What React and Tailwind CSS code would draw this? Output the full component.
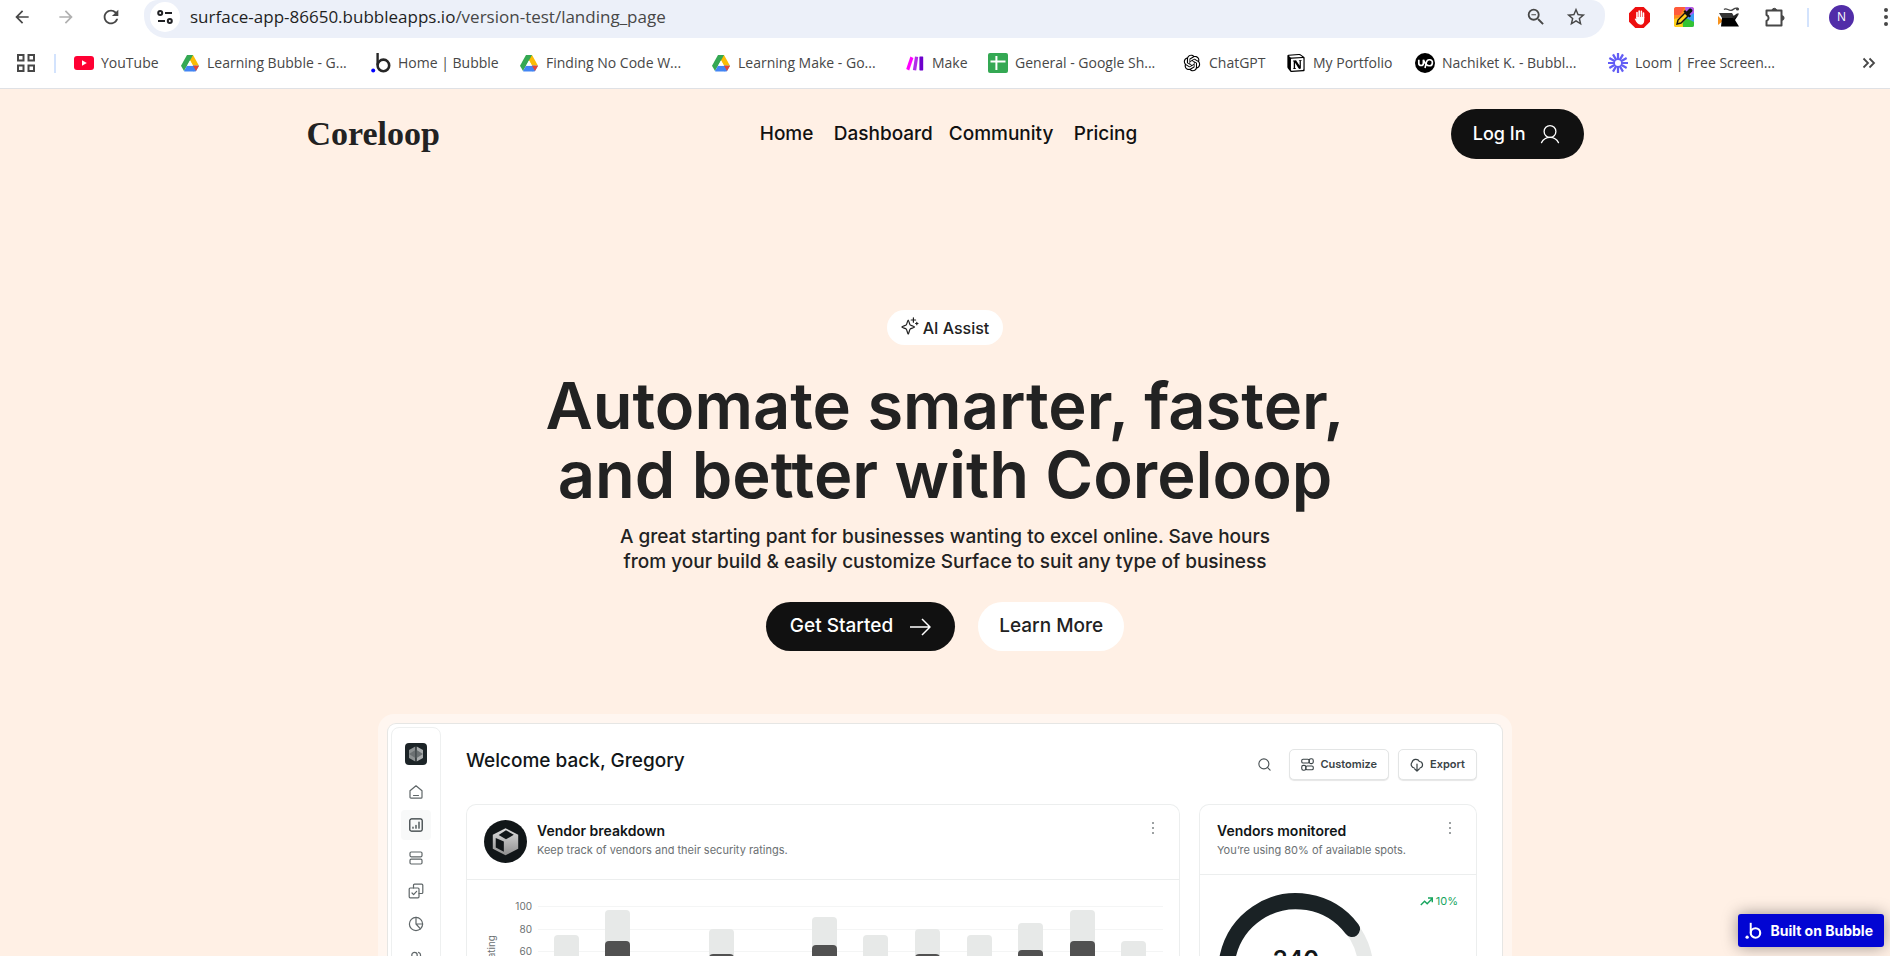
import React from "react";
import { MdArrowBack, MdArrowForward, MdRefresh, MdZoomOut, MdStarBorder } from "react-icons/md";
import { RiOpenaiFill } from "react-icons/ri";
import { SiNotion, SiLoom } from "react-icons/si";
import { Search } from "lucide-react";

/* ---------- browser icons ---------- */

function Drive() {
  return (
    <svg viewBox="0 0 18 17" className="h-[17px] w-[18px]" aria-hidden="true">
      <path d="M6 0h6l6 10.800h-6z" fill="#fbbc04" />
      <path d="M0 10.800l3 5.200L6 10.800 9 5.400 12 0H6z" fill="#34a853" />
      <path d="M3 16l3-5.200h9.200L12.600 16q-.4.6-1 .6H4.200Q3.400 16.600 3 16z" fill="#4285f4" />
      <path d="M12 10.800h6L15 16q-.3.600-1.200.600H12z" fill="#4285f4" />
      <path d="M12 10.800h6L15 16z" fill="#ea4335" />
      <path d="M9 5.400l3 5.400H6z" fill="#fff" />
    </svg>
  );
}

function Youtube() {
  return (
    <svg viewBox="0 0 20 14" className="h-[14px] w-5" aria-hidden="true">
      <rect width="20" height="14" rx="3" fill="#ff0033" />
      <path d="M8 4.200v5.600L12.800 7z" fill="#fff" />
    </svg>
  );
}

function BubbleMark({ className, dot, ink }) {
  return (
    <svg viewBox="0 0 20 22" className={className} aria-hidden="true">
      <circle cx="2.200" cy="18.600" r="2" fill={dot} />
      <path d="M6.600 1v12" stroke={ink} strokeWidth="2.400" fill="none" />
      <circle cx="12.400" cy="13.400" r="5.800" stroke={ink} strokeWidth="2.600" fill="none" />
    </svg>
  );
}

function MakeMark() {
  return (
    <svg viewBox="0 0 18 15" className="h-[15px] w-[18px]" aria-hidden="true">
      <path d="M4.400.6l3 1.400L3.200 14.400.2 13z" fill="#ff00ff" />
      <path d="M9 .4l3.200.6-2 13.600-3.300-.6z" fill="#b02de9" />
      <rect x="13.400" y=".4" width="3.800" height="14" rx=".6" fill="#6d00cc" />
    </svg>
  );
}

function Sheets() {
  return (
    <svg viewBox="0 0 20 20" className="size-5" aria-hidden="true">
      <rect width="20" height="20" rx="2" fill="#34a853" />
      <path d="M8.400 3v14M2.500 8.600h15" stroke="#fff" strokeWidth="2" />
    </svg>
  );
}

function UpMark() {
  return (
    <svg viewBox="0 0 20 20" className="size-5" aria-hidden="true">
      <circle cx="10" cy="10" r="10" fill="#000" />
      <path d="M3.800 6.800v3.400a2.300 2.300 0 0 0 4.600 0V6.800c.8 2.200 1.800 3.800 3.200 4.900" fill="none" stroke="#fff" strokeWidth="1.700" />
      <path d="M10 15l1.500-6a3 3 0 1 1 2.500 3.700c-1 0-1.900-.4-2.600-1" fill="none" stroke="#fff" strokeWidth="1.600" />
    </svg>
  );
}

function AppsGrid() {
  return (
    <svg viewBox="0 0 18 18" className="size-[18px]" fill="none" stroke="#474747" strokeWidth="2" aria-hidden="true">
      <rect x="1" y="1" width="5.500" height="5.500" />
      <rect x="11.500" y="1" width="5.500" height="5.500" />
      <rect x="1" y="11.500" width="5.500" height="5.500" />
      <rect x="11.500" y="11.500" width="5.500" height="5.500" />
    </svg>
  );
}

function SiteControls() {
  return (
    <svg viewBox="0 0 16 16" className="size-4" fill="none" stroke="#202124" strokeWidth="2" aria-hidden="true">
      <circle cx="3.200" cy="4" r="2" />
      <path d="M8 4h7M1 12h7" />
      <circle cx="12.800" cy="12" r="2" />
    </svg>
  );
}

function AdBlock() {
  return (
    <svg viewBox="0 0 20 20" className="size-[21px]" aria-hidden="true">
      <path d="M6 0h8l6 6v8l-6 6H6l-6-6V6z" fill="#ed0f0f" />
      <path d="M7.600 10V5.200M9.700 9.500V3.800M11.800 9.500V4.200M13.800 10.500V5.800" stroke="#fff" strokeWidth="1.500" strokeLinecap="round" />
      <path d="M6.900 9.500h7.600v3.300c0 2.500-1.200 4-3.400 4-2.600 0-3.800-1.700-5.400-4.800-.6-1.200.5-1.500 1.200-.4z" fill="#fff" />
    </svg>
  );
}

function ColorPicker() {
  return (
    <svg viewBox="0 0 20 20" className="size-5" aria-hidden="true">
      <defs>
        <clipPath id="pick"><rect width="20" height="20" rx="2.500" /></clipPath>
      </defs>
      <g clipPath="url(#pick)">
        <rect width="20" height="20" fill="#ff8a1f" />
        <path d="M0 0h11L6 8H0z" fill="#ff5a3c" />
        <path d="M11 0h9v8l-8 2z" fill="#b05cf0" />
        <path d="M20 6v14H10l2-9z" fill="#3d9bf5" />
        <path d="M6 20l6-9 8 4v5z" fill="#33c433" />
        <path d="M0 12l8-2 1 10H0z" fill="#ffd21a" />
      </g>
      <path d="M3 17l1-4 7-7 3 3-7 7z" fill="#ffcf1a" stroke="#111" strokeWidth="1.400" />
      <path d="M9.500 4.500l6 6 1.500-1.500-1.600-1.800 2.800-2.700c1.200-1.400-1.600-4-3-2.700L12.600 4.600 11 3z" fill="#111" />
    </svg>
  );
}

function ReaderMark() {
  return (
    <svg viewBox="0 0 22 20" className="h-5 w-[22px]" aria-hidden="true">
      <path d="M0 9l5 5-5 4z" fill="#f7931e" />
      <path d="M1 6h13l3 5H4z" fill="#333" />
      <path d="M4 11h12l5-4-4 6 4 6.500H3z" fill="#000" />
      <path d="M14 10l5-3.500h2L16 12z" fill="#222" />
      <path d="M6 2.500c2.500-2 4 1 7 .8S16 0 20 1.500" fill="none" stroke="#444" strokeWidth="1.300" />
      <circle cx="19.500" cy="2" r="1.600" fill="#444" />
    </svg>
  );
}

function Puzzle() {
  return (
    <svg viewBox="0 0 22 22" className="size-[22px]" fill="none" stroke="#474747" strokeWidth="2" strokeLinejoin="round" aria-hidden="true">
      <path d="M2.500 4.500h15v15h-15v-4.500a3.200 3.200 0 0 0 0-6z" />
      <path d="M8 4a2.400 2.400 0 0 1 4.600 0zM17.800 9.700a2.300 2.300 0 0 1 0 4.600z" fill="#474747" strokeWidth="1" />
    </svg>
  );
}

const bookmarks = [
  { label: "YouTube", width: "w-[106px]", icon: <Youtube /> },
  { label: "Learning Bubble - G...", width: "w-[191px]", icon: <Drive /> },
  { label: "Home | Bubble", width: "w-[148px]", icon: <BubbleMark className="h-[22px] w-5" dot="#0000ff" ink="#262626" /> },
  { label: "Finding No Code W...", width: "w-[192px]", icon: <Drive /> },
  { label: "Learning Make - Go...", width: "w-[194px]", icon: <Drive /> },
  { label: "Make", width: "w-[83px]", icon: <MakeMark /> },
  { label: "General - Google Sh...", width: "w-[194px]", icon: <Sheets /> },
  { label: "ChatGPT", width: "w-[104px]", icon: <RiOpenaiFill className="size-5 text-black" /> },
  { label: "My Portfolio", width: "w-[129px]", icon: <SiNotion className="size-[18px] text-black" /> },
  { label: "Nachiket K. - Bubbl...", width: "w-[193px]", icon: <UpMark /> },
  { label: "Loom | Free Screen...", width: "w-[180px]", icon: <SiLoom className="size-5 text-[#625df5]" /> },
];

function BrowserBar() {
  return (
    <div className="shrink-0 border-b border-[#dfe1e5] bg-white font-['Open_Sans',sans-serif]">
      <div className="flex h-[38px] items-start overflow-hidden">
        <div className="flex h-[34px] w-36 items-center gap-6 pl-3 text-[#474747]">
          <button aria-label="Back"><MdArrowBack className="size-5" /></button>
          <button aria-label="Forward" className="text-[#b0b0b0]"><MdArrowForward className="size-5" /></button>
          <button aria-label="Reload"><MdRefresh className="size-[22px]" /></button>
        </div>
        <div className="flex h-[38px] flex-1 items-start rounded-b-[22px] rounded-t-[14px] bg-[#ecf0f9]">
          <div className="flex h-[34px] flex-1 items-center pl-[6px] pr-[18px]">
            <button aria-label="Site information" className="flex size-[30px] items-center justify-center rounded-full bg-white">
              <SiteControls />
            </button>
            <a href="#top" className="ml-[10px] text-[17px] leading-6 text-[#474747]">
              <span className="text-[#1f1f1f]">surface-app-86650.bubbleapps.io</span>/version-test/landing_page
            </a>
            <div className="ml-auto flex items-center gap-[18px] text-[#474747]">
              <button aria-label="Zoom out"><MdZoomOut className="size-[22px]" /></button>
              <button aria-label="Bookmark this page"><MdStarBorder className="size-[22px]" /></button>
            </div>
          </div>
        </div>
        <div className="flex h-[34px] w-[285px] items-center pl-6">
          <div className="flex items-center gap-6">
            <button aria-label="Ad blocker"><AdBlock /></button>
            <button aria-label="Color picker"><ColorPicker /></button>
            <button aria-label="Reader"><ReaderMark /></button>
            <button aria-label="Extensions"><Puzzle /></button>
          </div>
          <span className="ml-[21px] h-[19px] w-[2px] bg-[#d3e3fd]" />
          <button aria-label="Profile" className="ml-5 flex size-[25px] items-center justify-center rounded-full bg-[#512da8] text-xs text-white">N</button>
          <button aria-label="More" className="ml-[30px] flex flex-col gap-[3px]">
            <span className="size-1 rounded-full bg-[#474747]" />
            <span className="size-1 rounded-full bg-[#474747]" />
            <span className="size-1 rounded-full bg-[#474747]" />
          </button>
        </div>
      </div>
      <div className="flex h-[50px] items-center pl-[17px] pr-[14px] text-[#474747]">
        <button aria-label="Apps"><AppsGrid /></button>
        <span className="ml-[19px] mr-[18px] h-[19px] w-[2px] bg-[#d3e3fd]" />
        {bookmarks.map((b) => (
          <a key={b.label} href="#top" className={`flex shrink-0 items-center gap-[7px] whitespace-nowrap text-sm ${b.width}`}>
            <span className="flex w-5 shrink-0 justify-center">{b.icon}</span>
            {b.label}
          </a>
        ))}
        <button aria-label="More bookmarks" className="ml-auto">
          <svg viewBox="0 0 14 12" className="h-3 w-[14px]" fill="none" stroke="#474747" strokeWidth="1.800" aria-hidden="true">
            <path d="M1.500 1.500L6 6l-4.500 4.500M7.500 1.500L12 6l-4.500 4.500" />
          </svg>
        </button>
      </div>
    </div>
  );
}

/* ---------- landing page ---------- */

function Person() {
  return (
    <svg viewBox="0 0 20 20" className="size-5" fill="none" stroke="#fff" strokeWidth="1.300" strokeLinecap="round" aria-hidden="true">
      <circle cx="10" cy="7.500" r="5.900" />
      <path d="M1.500 18.600c1.600-3 4.500-5.200 8.500-5.200s6.900 2.200 8.500 5.200" />
    </svg>
  );
}

function Sparkle() {
  return (
    <svg viewBox="0 0 18 18" className="mb-1 size-[18px]" fill="none" stroke="#222" strokeWidth="1.200" strokeLinejoin="round" strokeLinecap="round" aria-hidden="true">
      <path d="M7.200 3.200c.6 0 1.200 4 1.900 4.700s4.500 1.400 4.500 2.100-3.800 1.400-4.500 2.100-1.300 5-1.900 5-1.200-4.300-1.900-5S.8 10.700.8 10s3.800-1.400 4.500-2.100 1.300-4.700 1.900-4.700z" />
      <path d="M12.400.8v4.400M10.200 3h4.400M15.800 5.300v2.400M14.600 6.500H17" />
    </svg>
  );
}

function CubeLogo() {
  return (
    <svg viewBox="0 0 44 44" className="size-[43px] shrink-0" aria-hidden="true">
      <defs>
        <linearGradient id="cube" x1="0" y1="0" x2="0" y2="1">
          <stop offset="0" stopColor="#dcdcdc" />
          <stop offset="1" stopColor="#8f8f8f" />
        </linearGradient>
      </defs>
      <circle cx="22" cy="22" r="22" fill="#111618" />
      <path d="M22 8.500L35 15v14.500L22 36 9 29.500V15z" fill="url(#cube)" />
      <path d="M22.500 10.500l8 4.500-8 4.800-7.500-4.500zM12 18.500l8.300 3.500v10.500L12 28.200z" fill="#111618" />
    </svg>
  );
}

function SidebarLogo() {
  return (
    <svg viewBox="0 0 22 22" className="size-[22px]" aria-hidden="true">
      <rect width="22" height="22" rx="4" fill="#1c2427" />
      <path d="M10.300 3.500v15L4 15V7z" fill="#8d9192" />
      <path d="M11.700 3.500v15L18 15V7z" fill="#a9acad" />
      <path d="M4 11l6.300-4v8zM18 11l-6.300-4v8z" fill="#6b7072" />
    </svg>
  );
}

const line = { fill: "none", stroke: "currentColor", strokeWidth: 1.2, strokeLinejoin: "round", strokeLinecap: "round" };

const sideItems = [
  { label: "Home", art: <path d="M2 6.800L8 1.800l6 5v6.400a1 1 0 0 1-1 1H3a1 1 0 0 1-1-1zM5.500 11.500h5" /> },
  { label: "Analytics", active: true, art: <><rect x="1.800" y="1.800" width="12.400" height="12.400" rx="1.800" /><path d="M5 11.200v-1M8 11.200V8.400M11 11.200V5" /></> },
  { label: "Lists", art: <><rect x="2" y="2" width="12" height="4.800" rx="1.200" /><rect x="2" y="9.200" width="12" height="4.800" rx="1.200" /></> },
  { label: "Tasks", art: <><path d="M5.500 5V2.200a1 1 0 0 1 1-1h7.300a1 1 0 0 1 1 1v7.300a1 1 0 0 1-1 1H11" /><rect x="1.200" y="5" width="9.800" height="9.800" rx="1" /><path d="M4 10l1.600 1.600L8.600 8.300" /></> },
  { label: "Reports", art: <><circle cx="8" cy="8" r="6.600" /><path d="M8 1.400V8h6.600M8 8l4.500 4.800" /></> },
  { label: "Users", art: <><circle cx="6.500" cy="6" r="2.700" /><path d="M10.500 3.300a2.800 2.800 0 0 1 0 5.400M1.500 14c.8-2.500 2.600-3.400 5-3.400s4.200.9 5 3.400" /></> },
];

function Sidebar() {
  return (
    <nav aria-label="Dashboard" className="flex w-[50px] shrink-0 flex-col items-center gap-[3px] self-stretch rounded-lg border border-[#eef0f0] pt-[15px]">
      <div className="mb-[9px]"><SidebarLogo /></div>
      {sideItems.map((item) => (
        <button
          key={item.label}
          aria-label={item.label}
          className={`flex size-[30px] items-center justify-center rounded-sm ${item.active ? "bg-[#f8f9f9] text-[#2b3437]" : "text-[#5f6668]"}`}
        >
          <svg viewBox="0 0 16 16" className="size-4" {...line}>{item.art}</svg>
        </button>
      ))}
    </nav>
  );
}

function Dots() {
  return (
    <button aria-label="Options" className="flex flex-col gap-[3px]">
      <span className="size-[2px] rounded-full bg-[#7d8284]" />
      <span className="size-[2px] rounded-full bg-[#7d8284]" />
      <span className="size-[2px] rounded-full bg-[#7d8284]" />
    </button>
  );
}

const grid = [
  { label: "100", y: 26 },
  { label: "80", y: 49 },
  { label: "60", y: 71 },
  { label: "40", y: 94 },
  { label: "20", y: 117 },
  { label: "0", y: 140 },
];

const bars = [
  { x: 87, top: 55, dark: 84 },
  { x: 138, top: 30, dark: 61 },
  { x: 190, top: 84, dark: 102 },
  { x: 242, top: 49, dark: 74 },
  { x: 293, top: 84, dark: 102 },
  { x: 345, top: 37, dark: 65 },
  { x: 396, top: 55, dark: 84 },
  { x: 448, top: 49, dark: 74 },
  { x: 500, top: 55, dark: 84 },
  { x: 551, top: 43, dark: 70 },
  { x: 603, top: 30, dark: 61 },
  { x: 654, top: 61, dark: 84 },
];

function RatingChart() {
  return (
    <svg viewBox="0 0 712 160" className="block w-full" role="img" aria-label="Security rating by vendor">
      {grid.map((g) => (
        <g key={g.label}>
          <text x="65" y={g.y + 4} textAnchor="end" fontSize="10" fill="#6b7072">{g.label}</text>
          <path d={`M71 ${g.y + 0.5}H696`} stroke="#f4f5f5" />
        </g>
      ))}
      {bars.map((b) => (
        <g key={b.x}>
          <path d={`M${b.x} 140V${b.top + 4}q0-4 4-4h17q4 0 4 4V140z`} fill="#e7e9e8" />
          <path d={`M${b.x} 140V${b.dark + 4}q0-4 4-4h17q4 0 4 4V140z`} fill="#515151" />
        </g>
      ))}
      <text transform="translate(28 55) rotate(-90)" textAnchor="end" fontSize="10" fill="#6b7072">Security rating</text>
    </svg>
  );
}

function Gauge() {
  return (
    <svg viewBox="0 0 156 156" className="block size-[156px]" role="img" aria-label="240 vendors">
      <circle cx="78" cy="78" r="70" fill="none" stroke="#e7e9e8" strokeWidth="15" />
      <path d="M18 114A70 70 0 0 1 134 36" fill="none" stroke="#1a2225" strokeWidth="16" strokeLinecap="round" />
      <text x="78" y="75" textAnchor="middle" fontSize="24" fontWeight="600" fill="#111618">240</text>
    </svg>
  );
}

const actionClass =
  "flex h-[31px] items-center gap-[6px] rounded-[5px] border border-[#e3e5e5] bg-white px-[11px] text-[11px] font-semibold text-[#3a4346] shadow-[0_1px_1px_rgba(0,0,0,0.1)]";

function DashboardPreview() {
  return (
    <section className="mx-auto mt-[63px] w-full max-w-[1134px] rounded-t-2xl bg-[#fff6f0] px-[9px] pt-[9px]">
      <div className="flex rounded-t-[9px] border border-b-0 border-[#e6e6e4] bg-white pl-[3px] pt-[3px]">
        <Sidebar />
        <div className="min-w-0 flex-1 px-[25px] pt-[22px]">
          <div className="flex h-[31px] items-start">
            <h2 className="text-[19px] leading-6 font-medium text-[#111618]">Welcome back, Gregory</h2>
            <div className="ml-auto flex items-center gap-[9px]">
              <button aria-label="Search" className="mr-2"><Search className="size-[15px] text-[#4a5255]" strokeWidth={1.8} /></button>
              <button className={actionClass}>
                <svg viewBox="0 0 14 14" className="size-[13px]" {...line}>
                  <rect x=".8" y="1.400" width="8" height="4" rx="1.400" />
                  <rect x="8.800" y=".8" width="4.400" height="5.200" rx="1.800" />
                  <rect x=".8" y="8" width="4.400" height="5.200" rx="1.800" />
                  <rect x="5.200" y="8.600" width="8" height="4" rx="1.400" />
                </svg>
                Customize
              </button>
              <button className={actionClass}>
                <svg viewBox="0 0 14 14" className="size-[14px]" {...line}>
                  <path d="M4.300 10A3.500 3.500 0 0 1 2 4.300a4 4 0 0 1 7.400-.8A3.300 3.300 0 0 1 10 10M7 6v7M4.800 11L7 13.200 9.200 11" />
                </svg>
                Export
              </button>
            </div>
          </div>

          <div className="mt-6 grid grid-cols-[714fr_278fr] gap-[19px]">
            <div className="rounded-t-[10px] border border-b-0 border-[#eceeee]">
              <div className="flex h-[75px] items-start border-b border-[#eceeee] pl-[17px] pr-[25px] pt-[15px]">
                <CubeLogo />
                <div className="ml-[10px] pt-px">
                  <h3 className="text-sm leading-5 font-semibold text-[#111618]">Vendor breakdown</h3>
                  <p className="text-[11px] leading-[18px] text-[#6b7072]">Keep track of vendors and their security ratings.</p>
                </div>
                <div className="ml-auto pt-[2px]"><Dots /></div>
              </div>
              <RatingChart />
            </div>
            <div className="rounded-t-[10px] border border-b-0 border-[#eceeee]">
              <div className="flex h-[70px] items-start border-b border-[#eceeee] pl-[17px] pr-[25px] pt-4">
                <div>
                  <h3 className="text-sm leading-5 font-semibold text-[#111618]">Vendors monitored</h3>
                  <p className="text-[11px] leading-[18px] text-[#6b7072]">You’re using 80% of available spots.</p>
                </div>
                <div className="ml-auto pt-px"><Dots /></div>
              </div>
              <div className="flex items-start justify-between pl-[18px] pr-[18px] pt-[18px]">
                <Gauge />
                <p className="flex items-center gap-[3px] text-[11px] leading-4 text-[#17a55e]">
                  <svg viewBox="0 0 13 9" className="h-[9px] w-[13px]" fill="none" stroke="currentColor" strokeWidth="1.400" aria-hidden="true">
                    <path d="M.8 8L4.600 4.200l2.600 2.600L11.800 2M8 1h4.300v4.300" />
                  </svg>
                  10%
                </p>
              </div>
            </div>
          </div>
        </div>
      </div>
    </section>
  );
}

function Landing() {
  return (
    <div className="min-h-0 flex-1 overflow-hidden bg-[#fff0e5] px-6 pt-5 font-['Inter',sans-serif] text-[#222]">
      <header className="mx-auto grid w-full max-w-[1277px] grid-cols-[1fr_auto_1fr] items-center">
        <a href="#top" className="font-['Liberation_Serif',serif] text-[34px] leading-10 font-bold text-[#222]">Coreloop</a>
        <nav aria-label="Main" className="flex pl-[7px] text-[19px] leading-6 font-medium text-[#111]">
          <a href="#home" className="w-[74px]">Home</a>
          <a href="#dashboard" className="w-[115px]">Dashboard</a>
          <a href="#community" className="w-[125px]">Community</a>
          <a href="#pricing">Pricing</a>
        </nav>
        <button className="flex h-[50px] items-center gap-[14px] justify-self-end rounded-full bg-[#111] pl-[22px] pr-6 text-lg font-medium text-white">
          Log In
          <Person />
        </button>
      </header>

      <main className="flex flex-col items-center text-center">
        <p className="mt-[151px] flex h-[35px] items-center gap-1 rounded-full bg-white px-[14px] text-base font-medium">
          <Sparkle />
          AI Assist
        </p>
        <h1 className="mt-[26px] text-[65px] leading-[69px] font-semibold">
          Automate smarter, faster,
          <br />
          and better with Coreloop
        </h1>
        <p className="mt-[15px] text-[19px] leading-[25px] font-medium">
          A great starting pant for businesses wanting to excel online. Save hours
          <br />
          from your build &amp; easily customize Surface to suit any type of business
        </p>
        <div className="mt-7 flex gap-[23px]">
          <button className="flex h-[49px] items-center gap-4 rounded-full bg-[#111] px-6 text-[19px] font-medium text-white">
            Get Started
            <svg viewBox="0 0 22 18" className="h-[18px] w-[22px]" fill="none" stroke="#fff" strokeWidth="1.500" strokeLinejoin="round" aria-hidden="true">
              <path d="M1 9h20M13 1l8 8-8 8" />
            </svg>
          </button>
          <button className="h-[49px] rounded-full bg-white px-[21px] text-[19px] font-medium">Learn More</button>
        </div>
      </main>

      <DashboardPreview />
    </div>
  );
}

export default function App() {
  return (
    <div id="top" className="relative flex h-screen flex-col overflow-hidden">
      <BrowserBar />
      <Landing />
      <a
        href="#bubble"
        className="absolute bottom-[9px] right-[6px] flex h-[33px] items-center gap-2 rounded-[3px] bg-[#0205d3] pl-[7px] pr-[11px] font-['Inter',sans-serif] text-[14px] font-bold text-white shadow-[0_0_16px_rgba(0,0,0,0.4)]"
      >
        <BubbleMark className="h-[18px] w-[17px]" dot="#fff" ink="#fff" />
        Built on Bubble
      </a>
    </div>
  );
}
